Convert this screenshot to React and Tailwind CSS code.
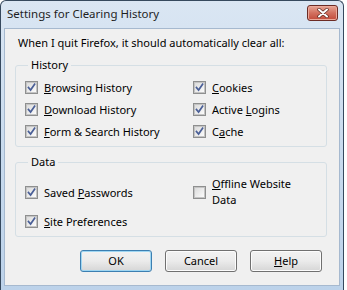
import React from 'react';

const font = { fontFamily: '"Noto Sans", "Open Sans", sans-serif' };

const Mn = ({ children }) => <span className="underline underline-offset-[1px]">{children}</span>;

const Box = ({ checked }) => (
  <span className="flex h-[13px] w-[13px] shrink-0 items-center justify-center border border-[#8e8f8f] bg-white">
    <span className="flex h-[11px] w-[11px] items-center justify-center border border-[#c4c4c4] bg-gradient-to-br from-[#dcdcdc] to-[#fbfbfb]">
      {checked && (
        <svg width="9" height="9" viewBox="0 0 9 9">
          <path d="M1.5 4.5 L3.6 7 L7.6 1.3" fill="none" stroke="#4a5f97" strokeWidth="1.7" strokeLinecap="square" />
        </svg>
      )}
    </span>
  </span>
);

const Check = ({ checked = true, children, className = '' }) => (
  <div className={`flex items-center gap-[6px] ${className}`}>
    <Box checked={checked} />
    <span className="leading-[15px]">{children}</span>
  </div>
);

const Button = ({ children, primary }) => (
  <button
    className={`h-[22px] w-[72px] rounded-[3px] border bg-gradient-to-b from-[#f2f2f2] via-[#ebebeb] to-[#d6d6d6] text-[11px] text-black ${
      primary ? 'border-[#3c7fb1] shadow-[inset_0_0_0_1px_#9fd6f2]' : 'border-[#707070] shadow-[inset_0_0_0_1px_#fcfcfc]'
    }`}
  >
    {children}
  </button>
);

export default function App() {
  return (
    <div className="h-[290px] w-[347px] bg-white text-[11px] text-black" style={font}>
      <div className="flex h-[290px] w-[344px] flex-col rounded-t-[6px] border-x border-t border-[#36495e] bg-gradient-to-b from-[#dae6f3] via-[#c9dbee] to-[#bcd2ea]">
        <div className="flex h-[27px] items-start justify-between pl-[6px] pr-[5px]">
          <span className="mt-[5px] text-[11.5px] leading-[16px] text-[#1e1e1e]">Settings for Clearing History</span>
          <span className="mt-[4px] flex h-[16px] w-[31px] items-center justify-center rounded-[3px] border border-[#6b2b25] bg-gradient-to-b from-[#e6a596] via-[#d2705f] to-[#c24a3a] shadow-[inset_0_0_0_1px_#eba99a]">
            <svg width="12" height="10" viewBox="0 0 12 10">
              <path d="M2 1.5 L10 8.5 M10 1.5 L2 8.5" stroke="#5c2820" strokeWidth="3.4" strokeLinecap="round" />
              <path d="M2 1.5 L10 8.5 M10 1.5 L2 8.5" stroke="#ffffff" strokeWidth="2" strokeLinecap="round" />
            </svg>
          </span>
        </div>
        <div className="mx-[3px] flex h-[258px] flex-col border border-[#a6b9cf] bg-[#f0f0f0]">
          <div className="ml-[13px] mt-[6px] leading-[16px]">When I quit Firefox, it should automatically clear all:</div>

          <fieldset className="ml-[10px] mt-[6px] w-[312px] rounded-[3px] border border-[#d5dfe5] pb-[4px] pl-[9px]">
            <legend className="ml-[3px] px-[3px] leading-[16px]">History</legend>
            <div className="mt-[3px] grid grid-cols-[168px_1fr]">
              <Check className="h-[22px]"><Mn>B</Mn>rowsing History</Check>
              <Check className="h-[22px]"><Mn>C</Mn>ookies</Check>
              <Check className="h-[22px]"><Mn>D</Mn>ownload History</Check>
              <Check className="h-[22px]">Active <Mn>L</Mn>ogins</Check>
              <Check className="h-[22px]"><Mn>F</Mn>orm &amp; Search History</Check>
              <Check className="h-[22px]">C<Mn>a</Mn>che</Check>
            </div>
          </fieldset>

          <fieldset className="ml-[10px] mt-[7px] w-[312px] rounded-[3px] border border-[#d5dfe5] pb-[1px] pl-[9px]">
            <legend className="ml-[3px] px-[3px] leading-[16px]">Data</legend>
            <div className="mt-[7px] grid grid-cols-[168px_1fr] grid-rows-[30px_28px]">
              <Check>Saved <Mn>P</Mn>asswords</Check>
              <Check checked={false}>
                <span className="flex w-[90px] flex-col leading-[16px]">
                  <span><Mn>O</Mn>ffline Website</span>
                  <span>Data</span>
                </span>
              </Check>
              <Check><Mn>S</Mn>ite Preferences</Check>
            </div>
          </fieldset>

          <div className="mt-[13px] flex justify-end gap-[13px] pr-[17px]">
            <Button primary>OK</Button>
            <Button>Cancel</Button>
            <Button><Mn>H</Mn>elp</Button>
          </div>
        </div>
      </div>
    </div>
  );
}
